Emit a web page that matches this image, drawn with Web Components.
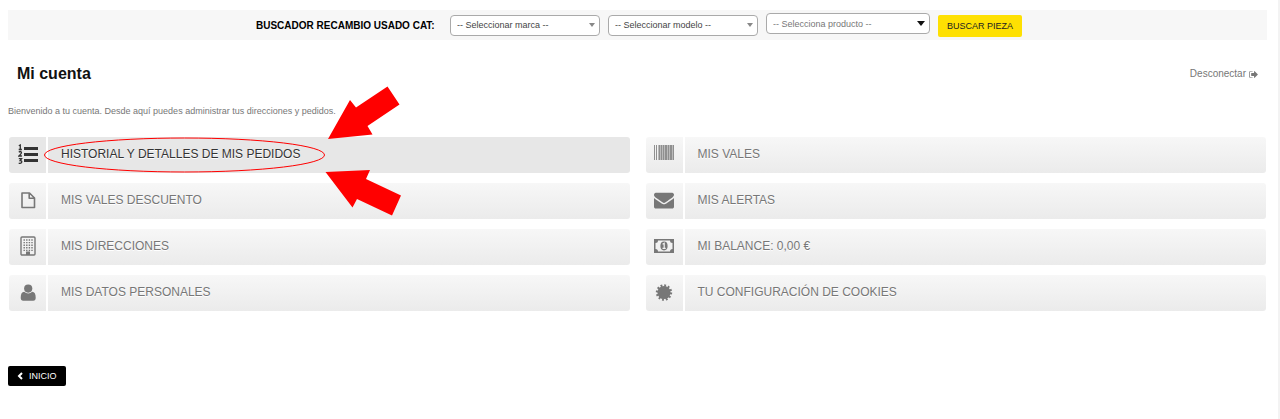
<!DOCTYPE html>
<html lang="es">
<head>
<meta charset="utf-8">
<meta name="viewport" content="width=device-width, initial-scale=1">
<title>Mi cuenta</title>
<style>
  * { box-sizing: border-box; }
  body {
    margin: 0;
    min-height: 100vh;
    background: #fff;
    border-right: 2px solid #f3f3f3;
    color: #777;
    font-family: "Liberation Sans", Arial, sans-serif;
    font-size: 9px;
  }
</style>
</head>
<body>
<account-page></account-page>

<script>
const arrow = '<path d="M0 0h10L5 6z"/>'

const icons = {
  list: '<g fill="currentColor"><path d="M6 3h14v3H6zM6 9h14v3H6zM6 15h14v3H6z"/></g><g fill="none" stroke="currentColor" stroke-width="1.3"><path d="M.8 1.8L2.3 1v4.6M.7 5.5h3.2M.8 8.2q1.4-1.2 2.4-.2t-2.3 4h3M.8 14.6h2.8l-1.5 2q2 0 1.6 1.6t-3 .9"/></g>',
  file: '<path d="M4 3h7.500l5 5v9.500H4zM11.200 3v5.300h5.300" fill="none" stroke="currentColor" stroke-width="1.600" stroke-linejoin="round"/>',
  building: '<rect x="3" y="1" width="14" height="18" rx="1" fill="none" stroke="currentColor" stroke-width="1.4"/><path fill="none" stroke="currentColor" stroke-width="1.4" stroke-dasharray="1.4 1.2" d="M5.5 4h10M5.5 6.6h10M5.5 9.2h10M5.5 11.8h10M5.5 14.4h10"/><path fill="currentColor" d="M8 15.5h4V19H8z"/>',
  user: '<path fill="currentColor" d="M6.200 9.800Q8 11.400 10.200 11.400t4-1.600q3.500 0 3.500 6 0 3-2.500 3h-10q-2.500 0-2.500-3 0-6 3.500-6z"/><circle cx="10.200" cy="6.600" r="4.100" fill="currentColor"/>',
  barcode: '<path fill="currentColor" opacity=".8" d="M0 1h1v15H0zM2 1h1v15H2zM5 1h1v15H5zM7 1h1v15H7zM9 1h1v15H9zM11 1h2v15h-2zM14 1h1v15h-1zM16 1h2v15h-2zM19 1h1v15h-1z"/><path fill="currentColor" opacity=".45" d="M4 1h1v15H4zM6 1h1v15H6zM8 1h1v15H8zM10 1h1v15h-1zM13 1h1v15h-1zM15 1h1v15h-1zM18 1h1v15h-1z"/>',
  envelope: '<svg viewBox="0 0 1792 1792"><path fill="currentColor" d="M1792 710v794q0 66-47 113t-113 47h-1472q-66 0-113-47t-47-113v-794q44 49 101 87 362 246 497 345 57 42 92.500 65.500t94.500 48 110 24.500h2q51 0 110-24.500t94.500-48 92.500-65.500q170-123 498-345 57-39 100-87zm0-294q0 79-49 151t-122 123q-376 261-468 325-10 7-42.500 31t-54 38.800-52 33.200-57.500 27-50 9h-2q-23 0-50-9t-57.500-27-52-33.200-54-38.800-42.500-31q-91-64-262-182.500t-205-142.500q-62-42-117-115.500t-55-136.500q0-78 41.500-130t118.500-52h1472q65 0 112.500 47t47.500 113z"/></svg>',
  money: '<path fill="currentColor" fill-rule="evenodd" d="M0 3h20v14H0zM4 4.500Q4 7 1.500 7v6Q4 13 4 15.500h12q0-2.500 2.500-2.500V7Q16 7 16 4.500z"/><ellipse cx="10" cy="10" rx="3.600" ry="4.400" fill="currentColor"/><path d="M8.600 8.300L10.200 7.300v5M8.500 12.400h3.200" fill="none" stroke="#f2f2f2" stroke-width="1.200"/>',
  certificate: '<circle cx="10" cy="10.500" r="6.600" fill="currentColor"/><circle cx="10" cy="10.500" r="7" fill="none" stroke="currentColor" stroke-width="2.400" stroke-dasharray="1.830 1.835"/>'
}

/**
 * Select box with its own arrow.
 */
customElements.define('search-select', class extends HTMLElement {
  connectedCallback () {
    const label = this.getAttribute('label')
    this.attachShadow({ mode: 'open' }).innerHTML = `
      <style>
        :host { display: grid; align-items: center; flex: 0 1 150px; }
        :host([strong]) { flex-basis: 164px; }
        select, svg { grid-area: 1 / 1; }
        select {
          appearance: none;
          width: 100%;
          height: 21px;
          padding: 0 16px 0 6px;
          border: 1px solid #aaa;
          border-radius: 4px;
          background: #fff;
          color: #444;
          font: inherit;
        }
        svg { justify-self: end; width: 6px; height: 4px; margin-right: 5px; fill: #888; pointer-events: none; }
        :host([strong]) select { color: #777; }
        :host([strong]) svg { width: 8px; height: 5px; fill: #111; }
      </style>
      <select aria-label="${label}"><option>${this.getAttribute('text')}</option></select>
      <svg viewBox="0 0 10 6" preserveAspectRatio="none" aria-hidden="true">${arrow}</svg>`
  }
})

/**
 * Grey bar with the parts finder.
 */
customElements.define('part-search', class extends HTMLElement {
  connectedCallback () {
    this.attachShadow({ mode: 'open' }).innerHTML = `
      <style>
        :host { display: block; }
        form {
          display: flex;
          align-items: center;
          justify-content: center;
          gap: 8px;
          min-height: 30px;
          margin: 0;
          padding: 3px 0 3px 3px;
          box-sizing: border-box;
          background: #f7f7f7;
        }
        strong { min-width: 186px; color: #000; font-size: 10px; white-space: nowrap; }
        search-select[strong] { align-self: flex-start; }
        button {
          align-self: flex-end;
          height: 22px;
          padding: 0 9px;
          border: 0;
          border-radius: 2px;
          background: #fee002;
          color: #222;
          font: inherit;
          white-space: nowrap;
        }
      </style>
      <form>
        <strong>BUSCADOR RECAMBIO USADO CAT:</strong>
        <search-select label="Marca" text="-- Seleccionar marca --"></search-select>
        <search-select label="Modelo" text="-- Seleccionar modelo --"></search-select>
        <search-select strong label="Producto" text="-- Selecciona producto --"></search-select>
        <button type="button">BUSCAR PIEZA</button>
      </form>`
  }
})

/**
 * One link of the account menu.
 */
customElements.define('account-link', class extends HTMLElement {
  connectedCallback () {
    this.attachShadow({ mode: 'open' }).innerHTML = `
      <style>
        :host { display: block; }
        a {
          display: flex;
          gap: 2px;
          height: 36px;
          color: #777;
          font-size: 12px;
          text-decoration: none;
          text-shadow: 0 1px #fff;
        }
        .icon, .text {
          display: flex;
          align-items: center;
          background: linear-gradient(#f7f7f7, #ebebeb);
        }
        .icon { justify-content: center; flex: none; width: 37px; border-radius: 3px 0 0 3px; }
        .text { flex: 1; padding: 0 13px 2px; border-radius: 0 3px 3px 0; }
        .icon > svg { width: 20px; height: 20px; margin-bottom: 2px; }
        :host([active]) a { color: #333; }
        :host([active]) .icon, :host([active]) .text { background: #e7e7e7; }
      </style>
      <a href="#">
        <span class="icon"><svg viewBox="0 0 20 20" aria-hidden="true">${icons[this.getAttribute('icon')]}</svg></span>
        <span class="text"><slot></slot></span>
      </a>`
  }
})

/**
 * Red ellipse and arrows over the order history link.
 */
customElements.define('order-marker', class extends HTMLElement {
  connectedCallback () {
    this.attachShadow({ mode: 'open' }).innerHTML = `
      <style>
        :host { position: absolute; left: 0; top: 0; pointer-events: none; }
        svg { display: block; overflow: visible; }
      </style>
      <svg width="400" height="80" viewBox="8 137 400 80" fill="#f00" aria-hidden="true">
        <ellipse cx="184.500" cy="155" rx="140" ry="17" fill="none" stroke="#f00"/>
        <path d="M328 139L350 100L356 107.500L387.500 86.500L399.500 104.500L367.500 126L372.500 134.500z"/>
        <path d="M325.500 172L370 170L366 179L401 195.500L392 215.500L357 199L352.500 207.500z"/>
      </svg>`
  }
})

customElements.define('account-page', class extends HTMLElement {
  connectedCallback () {
    this.attachShadow({ mode: 'open' }).innerHTML = `
      <style>
        :host { display: block; padding: 10px 11px 32px 8px; }
        header {
          display: flex;
          justify-content: space-between;
          align-items: center;
          padding: 24px 9px 0;
        }
        h1 { margin: 0; color: #111; font-size: 16px; line-height: 20px; }
        .logout {
          display: flex;
          align-items: center;
          gap: 3px;
          color: #777;
          font-size: 10px;
          line-height: 16px;
          text-decoration: none;
        }
        .logout svg { width: 9px; height: 9px; fill: currentColor; }
        p { margin: 21px 0 20px; line-height: 12px; }
        nav {
          position: relative;
          display: grid;
          grid-template-columns: 1fr 1fr;
          gap: 10px 16px;
          padding: 0 1px;
        }
        .home {
          display: inline-flex;
          align-items: center;
          gap: 6px;
          height: 20px;
          margin-top: 55px;
          padding: 0 9px;
          border-radius: 2px;
          background: #000;
          color: #fff;
          text-decoration: none;
        }
        .home svg { width: 6px; height: 8px; }
      </style>
      <part-search></part-search>
      <header>
        <h1>Mi cuenta</h1>
        <a class="logout" href="#">Desconectar
          <svg viewBox="64 256 1600 1280" aria-hidden="true"><path d="M704 1440q0 4 1 20t.5 26.500-3 23.500-10 19.500-20.500 6.500h-320q-119 0-203.500-84.500t-84.500-203.500v-704q0-119 84.500-203.500t203.500-84.500h320q13 0 22.500 9.500t9.500 22.500q0 4 1 20t.5 26.500-3 23.500-10 19.500-20.500 6.500h-320q-66 0-113 47t-47 113v704q0 66 47 113t113 47h312l11.500 1 11.500 3 8 5.500 7 9 2 13.500zM1632 896q0 26-19 45l-544 544q-19 19-45 19t-45-19-19-45v-288h-448q-26 0-45-19t-19-45v-384q0-26 19-45t45-19h448v-288q0-26 19-45t45-19 45 19l544 544q19 19 19 45z"/></svg></a>
      </header>
      <p>Bienvenido a tu cuenta. Desde aquí puedes administrar tus direcciones y pedidos.</p>
      <nav>
        <account-link icon="list" active>HISTORIAL Y DETALLES DE MIS PEDIDOS</account-link>
        <account-link icon="barcode">MIS VALES</account-link>
        <account-link icon="file">MIS VALES DESCUENTO</account-link>
        <account-link icon="envelope">MIS ALERTAS</account-link>
        <account-link icon="building">MIS DIRECCIONES</account-link>
        <account-link icon="money">MI BALANCE: 0,00 €</account-link>
        <account-link icon="user">MIS DATOS PERSONALES</account-link>
        <account-link icon="certificate">TU CONFIGURACIÓN DE COOKIES</account-link>
        <order-marker></order-marker>
      </nav>
      <a class="home" href="#"><svg viewBox="0 0 6 8" aria-hidden="true"><path d="M5 1L2 4l3 3" fill="none" stroke="#fff" stroke-width="2"/></svg>INICIO</a>`
  }
})
</script>
</body>
</html>
